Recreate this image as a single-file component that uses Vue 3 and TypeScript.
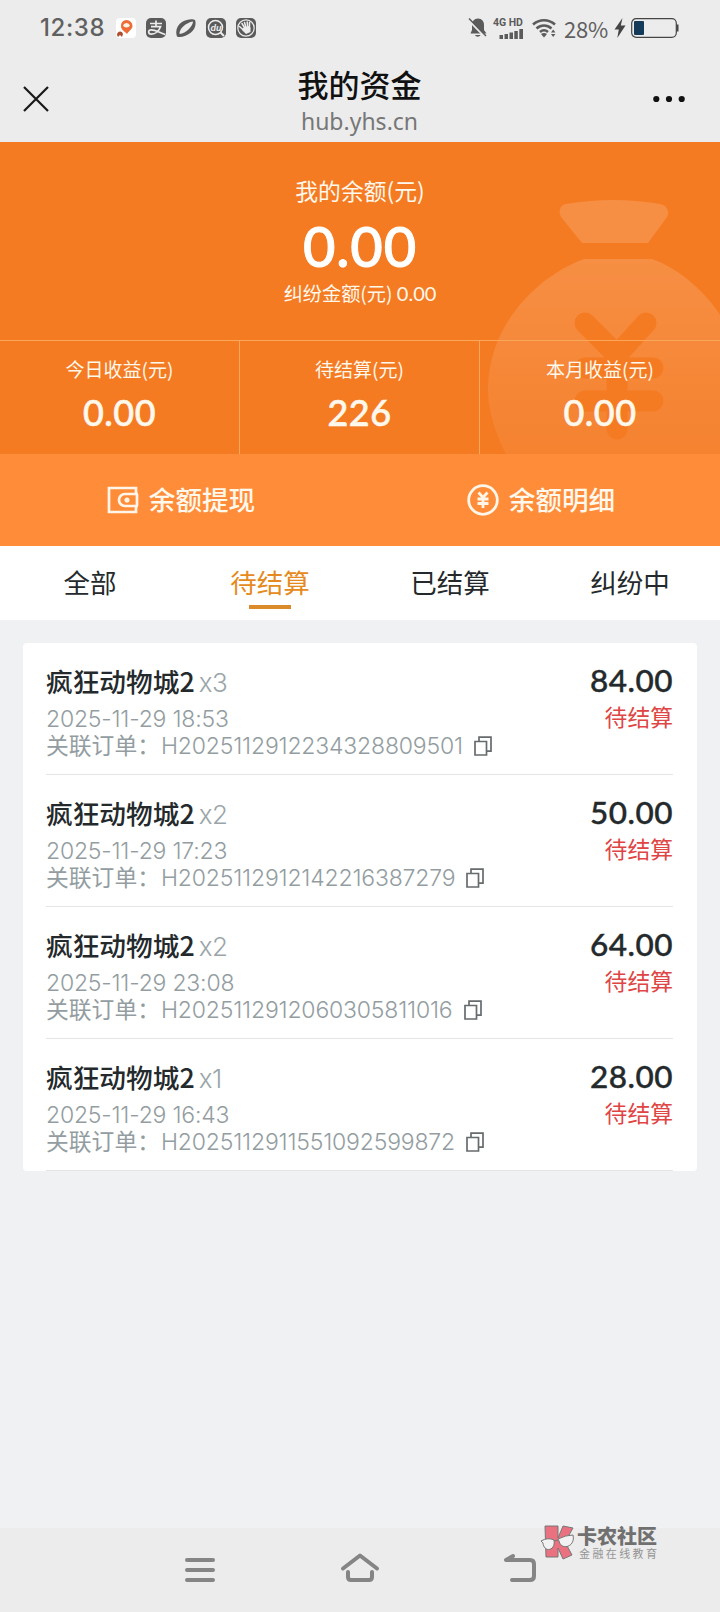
<script setup lang="ts">
interface Stat {
  label: string
  value: string
}
interface Order {
  name: string
  count: number
  time: string
  orderNo: string
  amount: string
}

const stats: Stat[] = [
  { label: '今日收益(元)', value: '0.00' },
  { label: '待结算(元)', value: '226' },
  { label: '本月收益(元)', value: '0.00' },
]
const tabs: string[] = ['全部', '待结算', '已结算', '纠纷中']
const activeTab = '待结算'
const orders: Order[] = [
  { name: '疯狂动物城2', count: 3, time: '2025-11-29 18:53', orderNo: 'H2025112912234328809501', amount: '84.00' },
  { name: '疯狂动物城2', count: 2, time: '2025-11-29 17:23', orderNo: 'H2025112912142216387279', amount: '50.00' },
  { name: '疯狂动物城2', count: 2, time: '2025-11-29 23:08', orderNo: 'H2025112912060305811016', amount: '64.00' },
  { name: '疯狂动物城2', count: 1, time: '2025-11-29 16:43', orderNo: 'H2025112911551092599872', amount: '28.00' },
]
</script>

<template>
  <div class="screen">
    <header class="top">
      <div class="status">
        <span class="clock">12:38</span>
        <div class="apps">
          <svg viewBox="0 0 20 20">
            <rect width="20" height="20" rx="4" fill="#fff" />
            <path d="M10.500 2a6 6 0 0 1 6 6c0 3-3.200 4.500-5.500 8-2-2.500-6-4-6-8a5.500 5.500 0 0 1 5.500-6Z" fill="#ee6c35" />
            <path d="M7 7.500a3.700 3.700 0 0 1 7 0c-1 2.500-6 2.500-7 0Z" fill="#fff4e8" />
            <path d="M1 17c0-4 5-5 6-1l-1 3-2-2-2 2Z" fill="#ad4d2d" />
          </svg>
          <svg viewBox="0 0 20 20">
            <rect width="20" height="20" rx="5" fill="#5b5b5b" />
            <path d="M4 5.500h12M10 2.500v6M5 8.700h9.500c-1.400 4-5 7.400-9.200 7.400-3.400 0-3.600-4.300 0-4.300 4.200 0 7.400 2.500 14 4.700" fill="none" stroke="#eee" stroke-width="1.700" />
          </svg>
          <svg viewBox="0 0 20 20">
            <path d="M1 18.500C-1 13 1 7 6 4c5-3.200 11-3.500 13-2 1.500 4 0 9-4 12.500C11 18 4 20 1 18.500Z" fill="#5b5b5b" />
            <path d="M3.500 16C3 11 10 4.500 17 3.500 17 8 10 15.500 3.500 16Z" fill="#ececec" />
          </svg>
          <svg viewBox="0 0 20 20">
            <rect width="20" height="20" rx="5" fill="#5b5b5b" />
            <circle cx="9.500" cy="9.500" r="7" fill="none" stroke="#eee" stroke-width="1.500" />
            <path d="m14.500 14.500 3.500 3.500" stroke="#eee" stroke-width="2" />
            <text x="4.600" y="12.600" class="du">du</text>
          </svg>
          <svg viewBox="0 0 20 20">
            <rect width="20" height="20" rx="5" fill="#5b5b5b" />
            <circle cx="10" cy="10" r="8.200" fill="none" stroke="#eee" stroke-width="1.200" />
            <path d="M3.500 8.500l4.500 4M6 5.500l3 5M8.500 4.500l1.500 5M11.200 4l.5 5.500M13.500 4.500V11" stroke="#eee" stroke-width="1.500" stroke-linecap="round" />
            <path d="M7 10l6-2 1.500 2v4L10 16l-4-4Z" fill="#eee" />
          </svg>
        </div>
        <div class="indicators">
          <svg class="bell" viewBox="0 0 20 22">
            <path d="M10 1.500c4 0 6 3 6 6.500v5l2.500 3.500h-16L4 13V8c0-3.500 2-6.500 6-6.500ZM7 18h5.500c-1 2.200-4.500 2.200-5.500 0Z" fill="#5b5b5b" />
            <path d="M0 2.500 17 20" stroke="#ececec" stroke-width="2" />
            <path d="m1 1.500 17 17.500" stroke="#5b5b5b" stroke-width="1.500" />
          </svg>
          <div class="cell">
            <span>4G HD</span>
            <svg viewBox="0 0 24 11">
              <path d="M.5 6h3.500v4H.5ZM5.500 5H9v5H5.500ZM10.500 3.500H14V10h-3.500ZM15.300 2h3.500v8h-3.500ZM20.300 0H24v10h-3.700Z" fill="#5b5b5b" />
            </svg>
          </div>
          <svg class="wifi" viewBox="0 0 24 20">
            <path d="M1 6.500C7.500.8 16.500.8 23 6.500M4.500 10.500c4.500-4 10.500-4 15 0M8 14c2.500-2.200 5.500-2.200 8 0" fill="none" stroke="#5b5b5b" stroke-width="2.600" />
            <path d="m9 16 3 3.500 3-3.500c-2-1.500-4-1.500-6 0Z" fill="#5b5b5b" />
            <path d="m19 14.500 2.200-3 2.200 3ZM19 16l2.200 3 2.200-3Z" fill="#5b5b5b" />
          </svg>
          <span class="percent">28%</span>
          <svg class="bolt" viewBox="0 0 12 20"><path d="M8.500 0 .5 11.500h4.300L3.300 20 11.500 7.500H6.800Z" fill="#454545" /></svg>
          <svg class="battery" viewBox="0 0 49 20">
            <rect x=".7" y=".7" width="44.600" height="18.600" rx="4.500" fill="none" stroke="#454545" stroke-width="1.200" />
            <rect x="3" y="3" width="10" height="14" rx="1" fill="#143a59" />
            <path d="M46.500 6.500v7" stroke="#454545" stroke-width="2" />
          </svg>
        </div>
      </div>
      <div class="nav">
        <svg class="close" viewBox="0 0 26 26"><path d="m1 1 24 24M25 1 1 25" stroke="#191919" stroke-width="2.200" /></svg>
        <div class="heading">
          <h1>我的资金</h1>
          <p>hub.yhs.cn</p>
        </div>
        <svg class="more" viewBox="0 0 32 8">
          <g fill="#111"><circle cx="3.300" cy="4" r="3.100" /><circle cx="16" cy="4" r="3.100" /><circle cx="28.700" cy="4" r="3.100" /></g>
        </svg>
      </div>
    </header>

    <section class="hero">
      <svg class="bag" viewBox="0 0 232 254">
        <defs>
          <linearGradient id="bagFill" x1="0" y1="0" x2="0" y2="1">
            <stop offset="0" stop-color="#fff" stop-opacity=".15" />
            <stop offset="1" stop-color="#fff" stop-opacity=".06" />
          </linearGradient>
          <mask id="yenMask">
            <rect width="260" height="254" fill="#fff" />
            <path d="m97 123 32 32 29-32M129 155v74M97 168h68M97 201h68" fill="none" stroke="#000" stroke-width="21" stroke-linecap="round" stroke-linejoin="round" />
          </mask>
        </defs>
        <path d="M78 4q47-8 94 0c7 1 10 8 7 13l-19 26H94L73 17c-3-6-1-12 5-13Z" fill="#fff" fill-opacity=".15" />
        <path d="M96 59h68c41 14 92 67 92 130 0 25-5 48-14 65H18C8 235 0 211 0 190 0 124 50 76 96 59Z" fill="url(#bagFill)" mask="url(#yenMask)" />
      </svg>
      <div class="balance">
        <div class="balance-label">我的余额(元)</div>
        <div class="balance-value">0.00</div>
        <div class="dispute">纠纷金额(元) <span>0.00</span></div>
      </div>
      <div class="stats">
        <div v-for="s in stats" :key="s.label" class="stat">
          <div class="stat-label">{{ s.label }}</div>
          <div class="stat-value">{{ s.value }}</div>
        </div>
      </div>
    </section>

    <section class="actions">
      <div class="action">
        <svg viewBox="0 0 32 32" fill="none" stroke="#fff5e8" stroke-width="2.700">
          <path d="M29 10V4H2v24h27v-6" />
          <path d="M31 10H18a6 6 0 0 0 0 12h13M30 10v12" />
          <circle cx="20" cy="16" r="1.200" />
        </svg>
        <span>余额提现</span>
      </div>
      <div class="action">
        <svg viewBox="0 0 32 32" fill="none" stroke="#fff5e8" stroke-width="2.800">
          <circle cx="16" cy="16" r="14.300" />
          <path d="m11.500 8.500 4.500 5 4.500-5M16 13.500V24M10.500 15h11M10.500 19.500h11" />
        </svg>
        <span>余额明细</span>
      </div>
    </section>

    <nav class="tabs">
      <div v-for="t in tabs" :key="t" class="tab" :class="{ active: t === activeTab }">{{ t }}</div>
    </nav>

    <main class="list">
      <article v-for="o in orders" :key="o.orderNo" class="order">
        <div class="info">
          <div class="name">{{ o.name }}<span class="count">x{{ o.count }}</span></div>
          <div class="time">{{ o.time }}</div>
          <div class="number">
            <span class="number-label">关联订单：</span><span class="number-value">{{ o.orderNo }}</span>
            <svg viewBox="0 0 18 20" fill="none" stroke="#666b6e" stroke-width="1.700">
              <path d="M1 5.500h11.500V19H1Z" />
              <path d="M5 5V1.200h12v14h-4" />
            </svg>
          </div>
        </div>
        <div class="result">
          <div class="amount">{{ o.amount }}</div>
          <div class="state">待结算</div>
        </div>
      </article>
    </main>

    <footer class="keys">
      <svg viewBox="0 0 40 36"><path d="M7 8h26M7 18h26M7 28h26" /></svg>
      <svg viewBox="0 0 40 36"><path d="M3 16.500 20 3.500l17 13M8 20v5q0 3 3 3h18q3 0 3-3v-5" /></svg>
      <svg viewBox="0 0 40 36"><path d="M13 4 6 8h24q4 0 4 4v12q0 4-4 4H12" /></svg>
    </footer>

    <div class="watermark">
      <svg viewBox="0 0 34 36">
        <path d="M5 2h13v12l5-12 10 2-8 14 7 13-9 4-5-11v9H6Z" fill="#ea7180" stroke="#777" stroke-width="1" />
        <path d="M1 17q7-4 13-1c2 11-10 13-11 3ZM18 15q8-4 15-4c3 12-12 16-14 6ZM14 17l4-1" fill="#f2f2f2" stroke="#777" stroke-width="1" />
      </svg>
      <div class="brand">
        <b>卡农社区</b>
        <span>金融在线教育</span>
      </div>
    </div>
  </div>
</template>

<style>
body {
  background: #f0f1f3;
}
</style>

<style scoped>
.screen {
  position: relative;
  display: flex;
  flex-direction: column;
  width: 720px;
  height: 1612px;
  overflow: hidden;
  background: #f0f1f3;
  font-family: 'Noto Sans CJK SC', sans-serif;
  color: #24292c;
  white-space: nowrap;
}
.top {
  height: 142px;
  background: #ececec;
}
.status {
  display: flex;
  align-items: center;
  height: 56px;
  padding: 0 40px;
}
.clock {
  width: 76px;
  font: 500 24px/56px Inter, sans-serif;
  letter-spacing: 0.6px;
  color: #606060;
}
.apps {
  display: flex;
  gap: 10px;
}
.apps svg {
  width: 20px;
  height: 20px;
}
.du {
  font: italic bold 9px 'Liberation Sans', sans-serif;
  fill: #eee;
}
.indicators {
  display: flex;
  align-items: center;
  margin-left: auto;
}
.bell {
  width: 20px;
  height: 22px;
}
.cell {
  display: flex;
  flex-direction: column;
  align-items: flex-end;
  width: 32px;
  margin: 0 9px 0 3px;
}
.cell span {
  font: bold 10.500px/12px Roboto, sans-serif;
  color: #5b5b5b;
}
.cell svg {
  width: 24px;
  height: 11px;
}
.wifi {
  width: 24px;
  height: 20px;
}
.percent {
  margin: 0 6px 0 8px;
  font-size: 22px;
  line-height: 28px;
  letter-spacing: -0.2px;
  color: #606060;
}
.bolt {
  width: 12px;
  height: 20px;
  margin-right: 5px;
}
.battery {
  width: 49px;
  height: 20px;
}
.nav {
  display: flex;
  justify-content: space-between;
  align-items: flex-start;
  height: 86px;
  padding: 0 35px 0 23px;
}
.close {
  width: 26px;
  height: 26px;
  margin: 30px 6px 0 0;
}
.heading {
  margin-left: 11px;
  text-align: center;
}
.heading h1 {
  margin: 8px 0 0;
  font-size: 31px;
  font-weight: 500;
  line-height: 40px;
  color: #111;
}
.heading p {
  margin: 3px 0 0;
  font: 400 23px/28px 'Noto Sans', sans-serif;
  color: #777;
}
.more {
  width: 32px;
  height: 8px;
  margin-top: 39px;
}
.hero {
  position: relative;
  height: 312px;
  background: #f57b23;
  color: #fff8ec;
  text-align: center;
}
.bag {
  position: absolute;
  right: 0;
  bottom: 0;
  width: 232px;
  height: 254px;
}
.balance {
  position: relative;
  height: 198px;
  box-sizing: border-box;
  padding-top: 33px;
}
.balance-label {
  font-size: 22.800px;
  line-height: 32px;
}
.balance-value {
  height: 68px;
  font: 500 56px/78px Lato, sans-serif;
  letter-spacing: 0.800px;
  color: #fff;
  -webkit-text-stroke: 1px #fff;
}
.dispute {
  margin-top: 4px;
  font-size: 19.200px;
  line-height: 28px;
}
.dispute span {
  font: 400 20px/28px Lato, sans-serif;
}
.stats {
  position: relative;
  display: grid;
  grid-template-columns: 240px 240px 1fr;
  height: 114px;
  box-sizing: border-box;
  border-top: 1px solid #fba75a;
}
.stat {
  border-right: 1px solid #fba75a;
}
.stat:last-child {
  border-right: 0;
}
.stat-label {
  margin-top: 14px;
  font-size: 19px;
  line-height: 28px;
}
.stat-value {
  font: 500 36px/58px Lato, sans-serif;
  letter-spacing: 0.500px;
  -webkit-text-stroke: 0.600px #fff8ec;
}
.actions {
  display: grid;
  grid-template-columns: 1fr 1fr;
  height: 92px;
  background: #ff8c38;
}
.action {
  display: flex;
  align-items: center;
  justify-content: center;
  gap: 10px;
  padding-left: 2px;
  font-size: 26.600px;
  font-weight: 500;
  color: #fff8ec;
}
.action span {
  padding-bottom: 3px;
}
.action svg {
  width: 32px;
  height: 32px;
}
.tabs {
  display: grid;
  grid-template-columns: repeat(4, 1fr);
  height: 74px;
  background: #fff;
}
.tab {
  display: flex;
  flex-direction: column;
  align-items: center;
  font-size: 26.500px;
  line-height: 72px;
}
.tab.active {
  color: #e58a20;
}
.tab.active::after {
  content: '';
  width: 42px;
  height: 4px;
  margin-top: -13px;
  background: #dc8b2a;
}
.list {
  height: 528px;
  margin: 23px 23px 0;
  padding: 0 24px 0 23px;
  border-radius: 4px;
  background: #fff;
}
.order {
  display: flex;
  justify-content: space-between;
  height: 132px;
  box-sizing: border-box;
  border-bottom: 1px solid #e3e5e7;
}
.name {
  height: 42px;
  margin-top: 17px;
  font-size: 26.700px;
  line-height: 42px;
  font-weight: 500;
}
.count {
  margin-left: 4px;
  font: 350 26px/1 Inter, sans-serif;
  letter-spacing: -0.500px;
  color: #9aa5a9;
}
.time {
  margin-top: 3px;
  font: 350 23px/28px Inter, sans-serif;
  letter-spacing: -0.200px;
  color: #939da1;
}
.number {
  display: flex;
  align-items: center;
  height: 26px;
  color: #939da1;
}
.number-label {
  width: 115px;
  padding-bottom: 3px;
  font-size: 22.800px;
  line-height: 26px;
}
.number-value {
  font: 350 23px/26px Inter, sans-serif;
  letter-spacing: -0.180px;
}
.number svg {
  width: 18px;
  height: 20px;
  margin-left: 11px;
}
.result {
  text-align: right;
}
.amount {
  margin-top: 16px;
  font: 500 31.500px/42px Lato, sans-serif;
  letter-spacing: 0.500px;
  -webkit-text-stroke: 0.400px #24292c;
}
.state {
  margin-top: 2px;
  font-size: 22.800px;
  line-height: 28px;
  color: #df4545;
}
.keys {
  display: flex;
  justify-content: space-between;
  height: 84px;
  box-sizing: border-box;
  margin-top: auto;
  padding: 24px 180px 0;
  background: #ececec;
}
.keys svg {
  width: 40px;
  height: 36px;
  fill: none;
  stroke: #858585;
  stroke-width: 4;
  stroke-linecap: round;
  stroke-linejoin: round;
}
.watermark {
  position: absolute;
  left: 540px;
  top: 1524px;
  display: flex;
  gap: 3px;
}
.watermark svg {
  width: 34px;
  height: 36px;
}
.brand {
  display: flex;
  flex-direction: column;
  color: #707070;
}
.brand b {
  font-size: 20px;
  font-weight: 900;
  line-height: 23px;
}
.brand span {
  margin-left: 2px;
  font-size: 11px;
  line-height: 13px;
  letter-spacing: 2.400px;
  color: #949494;
}
</style>
